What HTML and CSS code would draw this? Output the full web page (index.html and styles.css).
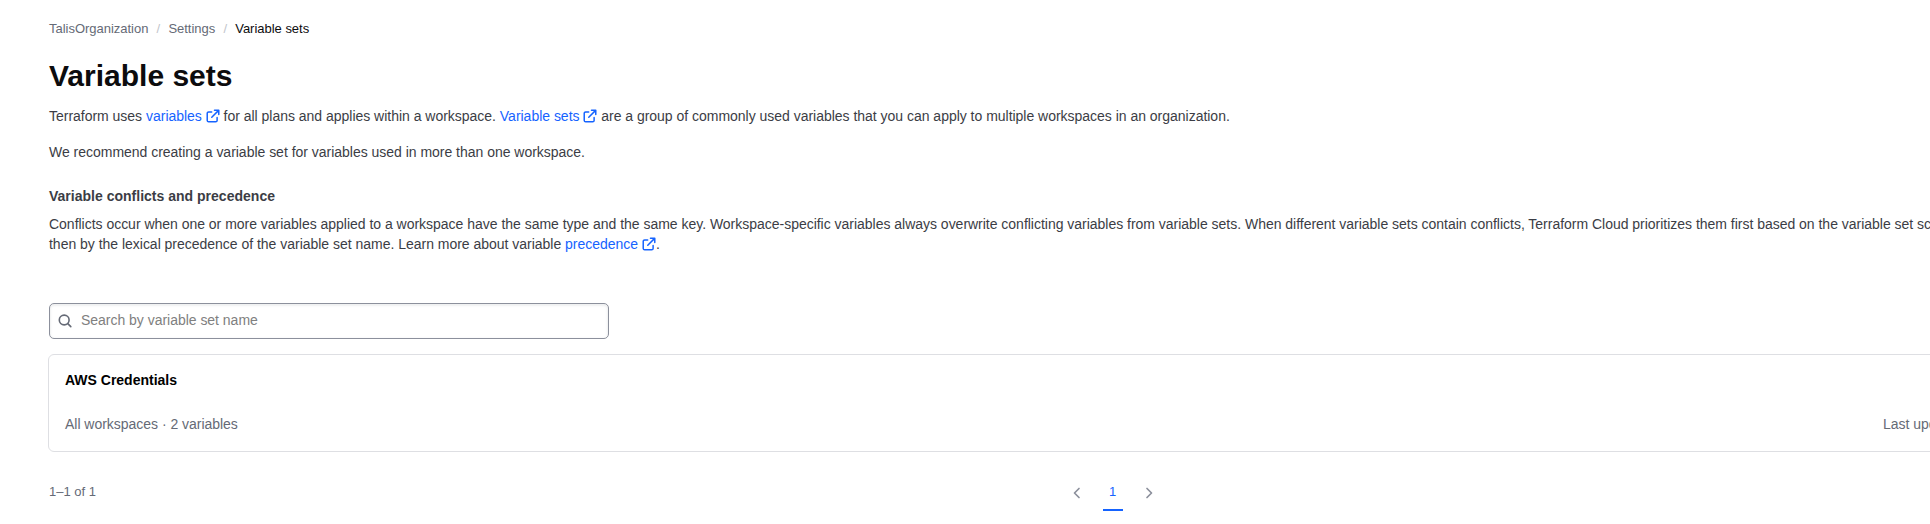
FILE: index.html
```html
<!DOCTYPE html>
<html lang="en">
<head>
<meta charset="utf-8">
<title>Variable sets</title>
<link rel="stylesheet" href="styles.css">
</head>
<body>
<svg class="defs" aria-hidden="true">
  <symbol id="external" viewBox="0 0 16 16"><path d="M6.5 3.3H3A1.6 1.6 0 0 0 1.4 4.9V13A1.6 1.6 0 0 0 3 14.6h8.1a1.6 1.6 0 0 0 1.6-1.6V9.7M9.7 1.4h4.9v4.9M14.4 1.6 6.6 9.4"/></symbol>
</svg>
<main class="page">
  <nav class="crumbs"><a class="crumb">TalisOrganization</a><span class="slash">/</span><a class="crumb">Settings</a><span class="slash">/</span><span class="current">Variable sets</span></nav>
  <h1 class="title">Variable sets</h1>
  <p class="text intro">Terraform uses <a class="link">variables <svg class="ext"><use href="#external"/></svg></a> for all plans and applies within a workspace. <a class="link">Variable sets <svg class="ext"><use href="#external"/></svg></a> are a group of commonly used variables that you can apply to multiple workspaces in an organization.</p>
  <p class="text recommend">We recommend creating a variable set for variables used in more than one workspace.</p>
  <h2 class="subtitle">Variable conflicts and precedence</h2>
  <p class="text conflicts">Conflicts occur when one or more variables applied to a workspace have the same type and the same key. Workspace-specific variables always overwrite conflicting variables from variable sets. When different variable sets contain conflicts, Terraform Cloud prioritizes them first based on the variable set scope and<br>then by the lexical precedence of the variable set name. Learn more about variable <a class="link">precedence <svg class="ext"><use href="#external"/></svg></a>.</p>
  <label class="search">
    <svg class="glass" viewBox="0 0 16 16"><circle cx="7.2" cy="7" r="4.9"/><path d="m10.8 10.6 3 3"/></svg>
    <input class="field" type="text" placeholder="Search by variable set name">
  </label>
  <section class="card">
    <h3 class="name">AWS Credentials</h3>
    <div class="meta"><span>All workspaces · 2 variables</span><span class="updated">Last updated</span></div>
  </section>
  <footer class="pager">
    <span class="range">1–1 of 1</span>
    <div class="pages">
      <svg class="chev" viewBox="0 0 16 16"><path d="M10 3.5 5.5 8l4.5 4.5"/></svg>
      <span class="page-no">1</span>
      <svg class="chev" viewBox="0 0 16 16"><path d="M6 3.5 10.5 8 6 12.5"/></svg>
    </div>
    <span></span>
  </footer>
</main>
</body>
</html>
```
FILE: styles.css
```css
* { box-sizing: border-box; }
html { overflow: hidden; background: #fff; }
body { margin: 0; height: 524px; overflow: hidden; font-family: "Liberation Sans", Arial, sans-serif; font-size: 14px; color: #3b3d45; }
.defs { display: none; }
.page { width: 2176px; padding: 18px 0 0 49px; }
.crumbs { display: flex; height: 22px; line-height: 22px; font-size: 13px; letter-spacing: -0.02px; color: #656a76; }
.slash { width: 20px; text-align: center; color: #c2c5cb; }
.current { color: #0c0c0e; }
.title { margin: 17px 0 0; font-size: 30px; line-height: 38px; color: #0c0c0e; }
.text { margin: 0; line-height: 20px; white-space: nowrap; letter-spacing: -0.018px; }
.intro { margin-top: 11px; }
.recommend { margin-top: 16px; }
.subtitle { margin: 24px 0 0; font-size: 14px; line-height: 20px; letter-spacing: 0.01px; }
.conflicts { margin-top: 8px; }
.link { color: #1563ff; }
.ext { width: 14px; height: 14px; vertical-align: -2px; fill: none; stroke: currentColor; stroke-width: 1.7; stroke-linecap: round; stroke-linejoin: round; }
.search { display: flex; align-items: center; gap: 8px; width: 560px; height: 36px; margin-top: 49px; padding: 0 8px 1px 7px; border: 1px solid #8c909c; border-radius: 5px; box-shadow: inset 0 1px 2px 1px rgba(101, 106, 118, 0.1); }
.glass { width: 16px; height: 16px; fill: none; stroke: #656a76; stroke-width: 1.6; stroke-linecap: round; }
.field { flex: 1; padding: 0 0 1px; border: 0; outline: 0; background: none; font: inherit; letter-spacing: -0.024px; }
.field::placeholder { color: #808080; }
.card { margin: 15px 0 0 -1px; height: 98px; padding: 15px 16px; border: 1px solid #dedfe3; border-radius: 6px; }
.name { margin: 0; font-size: 14px; line-height: 20px; color: #000; }
.meta { display: flex; justify-content: space-between; margin-top: 24px; line-height: 20px; color: #656a76; letter-spacing: -0.024px; }
.updated { width: 276px; }
.pager { display: grid; grid-template-columns: 1fr auto 1fr; margin-top: 23px; height: 36px; font-size: 13px; line-height: 34px; color: #656a76; }
.pages { display: flex; align-items: center; gap: 18px; }
.page-no { width: 20px; height: 36px; border-bottom: 2px solid #1563ff; color: #1563ff; text-align: center; line-height: 34px; }
.chev { width: 16px; height: 16px; fill: none; stroke: #8c909c; stroke-width: 1.7; stroke-linecap: round; stroke-linejoin: round; }
```
